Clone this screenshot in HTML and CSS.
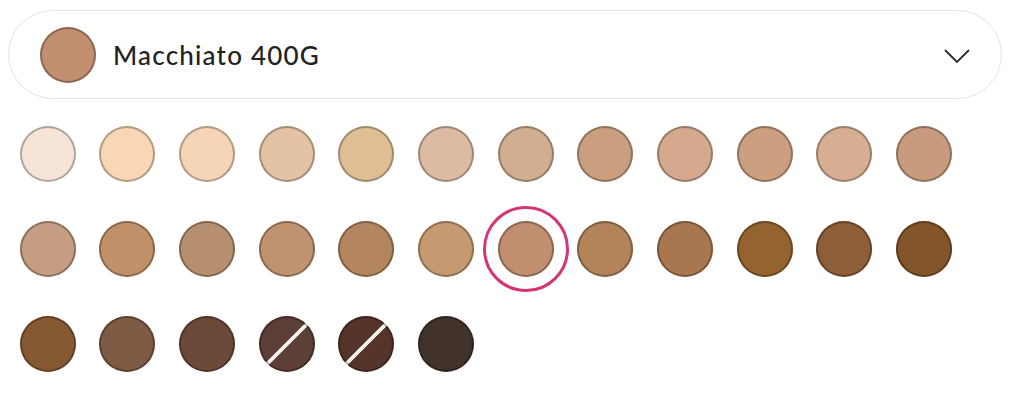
FILE: index.html
```html
<!DOCTYPE html>
<html lang="en">
<head>
  <meta charset="UTF-8" />
  <title>Shade picker</title>
  <link rel="stylesheet" href="styles.css">
</head>
<body>
  <div class="picker">
    <div class="picker-select">
      <span class="shade shade-current"></span>
      <span class="picker-label">Macchiato 400G</span>
      <svg class="chevron" width="26" height="14" viewBox="0 0 26 14">
        <path d="M1 1 L13 13 L25 1" fill="none" stroke="#2b2b2b" stroke-width="1.8" />
      </svg>
    </div>

    <div class="shades">
      <span class="shade" style="background-color:#f6e4d8"></span>
      <span class="shade" style="background-color:#f9d7b6"></span>
      <span class="shade" style="background-color:#f6d5b7"></span>
      <span class="shade" style="background-color:#e4c3a5"></span>
      <span class="shade" style="background-color:#dfbe96"></span>
      <span class="shade" style="background-color:#ddbba2"></span>
      <span class="shade" style="background-color:#d2ae90"></span>
      <span class="shade" style="background-color:#c99f7f"></span>
      <span class="shade" style="background-color:#d4a98e"></span>
      <span class="shade" style="background-color:#cb9f7f"></span>
      <span class="shade" style="background-color:#d7ae92"></span>
      <span class="shade" style="background-color:#c89b7e"></span>

      <span class="shade" style="background-color:#c49d82"></span>
      <span class="shade" style="background-color:#c09169"></span>
      <span class="shade" style="background-color:#b68f70"></span>
      <span class="shade" style="background-color:#bf9270"></span>
      <span class="shade" style="background-color:#b3865f"></span>
      <span class="shade" style="background-color:#c69a70"></span>
      <span class="shade selected" style="background-color:#c18f6f"></span>
      <span class="shade" style="background-color:#b3835a"></span>
      <span class="shade" style="background-color:#a8774f"></span>
      <span class="shade" style="background-color:#95632f"></span>
      <span class="shade" style="background-color:#8e5e38"></span>
      <span class="shade" style="background-color:#83552a"></span>

      <span class="shade" style="background-color:#855a32"></span>
      <span class="shade" style="background-color:#7f5a45"></span>
      <span class="shade" style="background-color:#6b4a3a"></span>
      <span class="shade sold-out" style="--c:#5c3f36"></span>
      <span class="shade sold-out" style="--c:#553429"></span>
      <span class="shade" style="background-color:#41322c"></span>
    </div>
  </div>
</body>
</html>
```

FILE: styles.css
```css
body, html {
  margin: 0;
  padding: 0;
  background: #fff;
  font-family: Lato, 'Open Sans', sans-serif;
}

.picker {
  padding: 10px 22px 0 8px;
}

.picker-select {
  display: flex;
  align-items: center;
  height: 87px;
  border: 1.5px solid #e3e3e3;
  border-radius: 45px;
  padding: 0 31px 0 31px;
}

.picker-label {
  flex: 1;
  margin-left: 17px;
  font-size: 26px;
  font-weight: 500;
  color: #222;
  letter-spacing: 1.2px;
}

.chevron {
  display: block;
  margin-top: 2px;
}

.shade {
  display: block;
  position: relative;
  width: 56px;
  height: 56px;
  border-radius: 50%;
  box-shadow: inset 0 0 0 2px rgba(0, 0, 0, 0.28);
}

.shade-current {
  background-color: #c18f6f;
}

.shades {
  display: grid;
  grid-template-columns: repeat(12, 56px);
  column-gap: 23.7px;
  row-gap: 39px;
  margin-top: 27px;
  margin-left: 11.5px;
}

.selected::after {
  content: "";
  position: absolute;
  inset: -15px;
  border: 3px solid #d63573;
  border-radius: 50%;
}

.sold-out {
  background: linear-gradient(to top left,
    var(--c) calc(50% - 2.2px),
    #f4f0ec calc(50% - 1.7px),
    #f4f0ec calc(50% + 1.7px),
    var(--c) calc(50% + 2.2px));
}
```
